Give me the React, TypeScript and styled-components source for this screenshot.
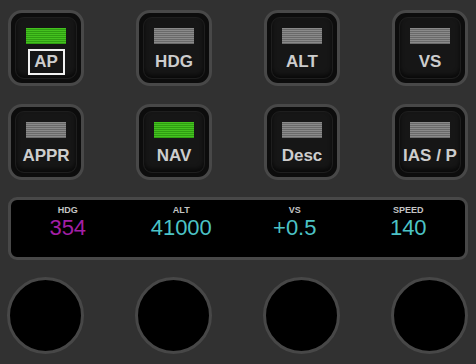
import React from "react";
import styled, { createGlobalStyle } from "styled-components";

const GlobalStyle = createGlobalStyle`
  html, body {
    margin: 0;
    padding: 0;
    background: #313131;
  }
  body {
    font-family: "Liberation Sans", Arial, sans-serif;
  }
`;

const Page = styled.div`
  width: 460px;
  padding: 10px 8px 0;
  display: flex;
  flex-direction: column;
`;

const ButtonGrid = styled.div`
  display: grid;
  grid-template-columns: repeat(4, 76px);
  justify-content: space-between;
  row-gap: 18px;
`;

const KeyOuter = styled.div`
  box-sizing: border-box;
  width: 76px;
  height: 76px;
  border: 3px solid #484848;
  border-radius: 14px;
  background: #0c0c0c;
  padding: 4px;
`;

const KeyFace = styled.div`
  box-sizing: border-box;
  height: 100%;
  border-radius: 9px;
  background: #161616;
  border: 1px solid #1e1e1e;
  box-shadow: inset 0 -3px 4px rgba(0, 0, 0, 0.6);
  display: flex;
  flex-direction: column;
  align-items: center;
  padding-top: 10px;
`;

const Indicator = styled.div<{ $on: boolean }>`
  width: 40px;
  height: 16px;
  background: ${(p) =>
    p.$on
      ? "repeating-linear-gradient(to bottom, #44c21f 0px, #44c21f 1px, #2f9d12 1px, #2f9d12 2px)"
      : "repeating-linear-gradient(to bottom, #8a8a8a 0px, #8a8a8a 1px, #6a6a6a 1px, #6a6a6a 2px)"};
`;

const KeyLabel = styled.div<{ $selected?: boolean }>`
  box-sizing: border-box;
  margin-top: 5px;
  height: 26px;
  min-width: 37px;
  padding: 0 4px;
  border: 2px solid ${(p) => (p.$selected ? "#f2f2f2" : "transparent")};
  display: flex;
  align-items: center;
  justify-content: center;
  color: #cdcdcd;
  font-weight: 700;
  font-size: 17px;
  white-space: nowrap;
`;

const Display = styled.div`
  box-sizing: border-box;
  margin-top: 17px;
  height: 63px;
  border: 3px solid #484848;
  border-radius: 9px;
  background: #000;
  display: grid;
  grid-template-columns: repeat(4, 1fr);
  padding-top: 5px;
`;

const Readout = styled.div`
  display: flex;
  flex-direction: column;
  align-items: center;
`;

const ReadoutLabel = styled.div`
  color: #c4c4c4;
  font-size: 9px;
  font-weight: 700;
  line-height: 11px;
`;

const ReadoutValue = styled.div<{ $color: string }>`
  color: ${(p) => p.$color};
  font-size: 22px;
  line-height: 24px;
`;

const KnobRow = styled.div`
  margin-top: 17px;
  display: grid;
  grid-template-columns: repeat(4, 77px);
  justify-content: space-between;
  margin-left: -1px;
`;

const Knob = styled.div`
  box-sizing: border-box;
  width: 77px;
  height: 77px;
  border-radius: 50%;
  border: 3px solid #474747;
  background: #000;
`;

const keys = [
  { label: "AP", on: true, selected: true },
  { label: "HDG", on: false },
  { label: "ALT", on: false },
  { label: "VS", on: false },
  { label: "APPR", on: false },
  { label: "NAV", on: true },
  { label: "Desc", on: false },
  { label: "IAS / P", on: false },
];

const readouts = [
  { label: "HDG", value: "354", color: "#a31fa6" },
  { label: "ALT", value: "41000", color: "#4cc3c6" },
  { label: "VS", value: "+0.5", color: "#4cc3c6" },
  { label: "SPEED", value: "140", color: "#4cc3c6" },
];

export default function App() {
  return (
    <>
      <GlobalStyle />
      <Page>
        <ButtonGrid>
          {keys.map((k) => (
            <KeyOuter key={k.label}>
              <KeyFace>
                <Indicator $on={k.on} />
                <KeyLabel $selected={k.selected}>{k.label}</KeyLabel>
              </KeyFace>
            </KeyOuter>
          ))}
        </ButtonGrid>
        <Display>
          {readouts.map((r) => (
            <Readout key={r.label}>
              <ReadoutLabel>{r.label}</ReadoutLabel>
              <ReadoutValue $color={r.color}>{r.value}</ReadoutValue>
            </Readout>
          ))}
        </Display>
        <KnobRow>
          {[0, 1, 2, 3].map((i) => (
            <Knob key={i} />
          ))}
        </KnobRow>
      </Page>
    </>
  );
}
